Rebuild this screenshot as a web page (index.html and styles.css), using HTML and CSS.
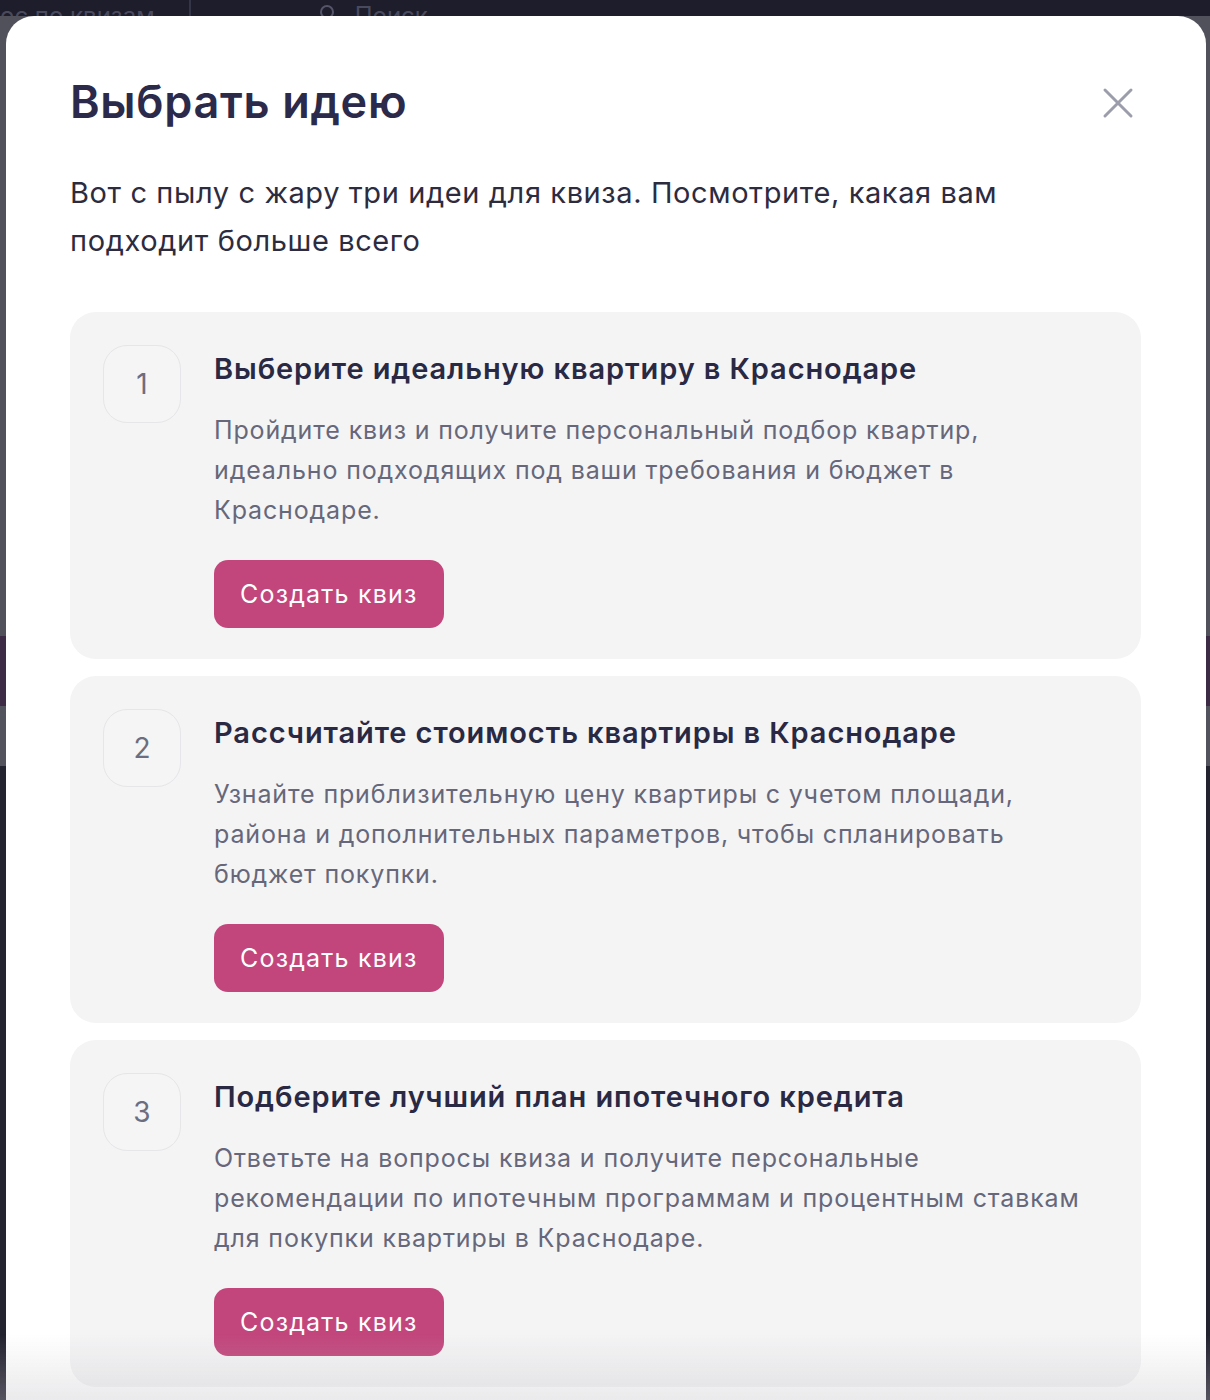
FILE: index.html
```html
<!DOCTYPE html>
<html lang="ru">
<head>
<meta charset="utf-8">
<title>Выбрать идею</title>
<link rel="stylesheet" href="styles.css">
</head>
<body>
<div class="backdrop">
  <div class="topbar">
    <span class="topbar-text">ос по квизам</span>
    <span class="topbar-sep"></span>
    <span class="topbar-search">
      <svg width="20" height="20" viewBox="0 0 20 20"><circle cx="8" cy="8" r="6" fill="none" stroke="#55556a" stroke-width="2"/></svg>
      <span class="topbar-text">Поиск</span>
    </span>
  </div>
  <div class="strip strip-a"></div>
  <div class="strip strip-b"></div>
  <div class="strip strip-c"></div>
  <div class="strip strip-d"></div>
</div>

<div class="modal">
  <div class="modal-head">
    <h1 class="modal-title">Выбрать идею</h1>
    <button class="close" aria-label="Закрыть">
      <svg width="32" height="32" viewBox="0 0 32 32"><path d="M3 3 L29 29 M29 3 L3 29" stroke="#9b9dab" stroke-width="3" stroke-linecap="round"/></svg>
    </button>
  </div>
  <p class="modal-sub">Вот с пылу с жару три идеи для квиза. Посмотрите, какая вам подходит больше всего</p>

  <div class="cards">
    <div class="card">
      <div class="num">1</div>
      <div class="card-body">
        <h2 class="card-title">Выберите идеальную квартиру в Краснодаре</h2>
        <p class="card-desc">Пройдите квиз и получите персональный подбор квартир, идеально подходящих под ваши требования и бюджет в Краснодаре.</p>
        <button class="btn">Создать квиз</button>
      </div>
    </div>
    <div class="card">
      <div class="num">2</div>
      <div class="card-body">
        <h2 class="card-title">Рассчитайте стоимость квартиры в Краснодаре</h2>
        <p class="card-desc">Узнайте приблизительную цену квартиры с учетом площади, района и дополнительных параметров, чтобы спланировать бюджет покупки.</p>
        <button class="btn">Создать квиз</button>
      </div>
    </div>
    <div class="card">
      <div class="num">3</div>
      <div class="card-body">
        <h2 class="card-title">Подберите лучший план ипотечного кредита</h2>
        <p class="card-desc">Ответьте на вопросы квиза и получите персональные рекомендации по ипотечным программам и процентным ставкам для покупки квартиры в Краснодаре.</p>
        <button class="btn">Создать квиз</button>
      </div>
    </div>
  </div>
</div>
<div class="fade"></div>
</body>
</html>
```

FILE: styles.css
```css
* { box-sizing: border-box; }
html, body { margin: 0; padding: 0; }
body {
  width: 1210px;
  height: 1400px;
  overflow: hidden;
  background: #4f4f5a;
  font-family: Inter, "Noto Sans", "Liberation Sans", sans-serif;
}
.backdrop {
  height: 1400px;
  display: flex;
  flex-direction: column;
}
.topbar {
  height: 16px;
  background: #1e1d2b;
  display: flex;
  align-items: flex-end;
  overflow: hidden;
  gap: 20px;
  flex: none;
}
.topbar-text {
  color: #4a4a5e;
  font-size: 24px;
  line-height: 18px;
  transform: translateY(9px);
  display: inline-block;
}
.topbar-sep { width: 2px; height: 16px; background: #35354a; margin-left: 14px; }
.topbar-search { display: flex; align-items: flex-end; gap: 16px; margin-left: 108px; }
.topbar-search svg { transform: translateY(8px); }
.strip { flex: none; }
.strip-a { height: 620px; background: #51515c; }
.strip-b { height: 70px; background: #3d2a45; }
.strip-c { height: 60px; background: #53535d; }
.strip-d { flex: 1; background: #23222f; }

.modal {
  position: fixed;
  top: 16px;
  left: 6px;
  width: 1200px;
  bottom: -40px;
  background: #ffffff;
  border-radius: 28px 28px 0 0;
  padding: 58px 65px 0 64px;
  overflow: hidden;
}
.modal-head {
  display: flex;
  justify-content: space-between;
  align-items: center;
}
.modal-title {
  margin: 0;
  font-size: 45px;
  line-height: 56px;
  font-weight: 600;
  color: #2b2a4b;
  letter-spacing: 0.7px;
}
.close {
  border: 0;
  background: none;
  padding: 0;
  width: 32px;
  height: 32px;
  margin-right: 7px;
  margin-top: 2px;
  display: flex;
}
.modal-sub {
  margin: 39px 0 0;
  width: 960px;
  font-size: 29px;
  line-height: 48px;
  color: #2d2c3f;
  font-weight: 400;
  letter-spacing: 0.6px;
}
.cards {
  margin-top: 47px;
  display: flex;
  flex-direction: column;
  gap: 17px;
}
.card {
  background: #f4f4f5;
  border-radius: 26px;
  padding: 33px 40px 31px 33px;
  display: flex;
  gap: 33px;
  align-items: flex-start;
}
.num {
  flex: none;
  width: 78px;
  height: 78px;
  border: 1.5px solid #e6e6e9;
  border-radius: 24px;
  display: flex;
  align-items: center;
  justify-content: center;
  font-size: 28px;
  color: #6c6e80;
  background: #f5f5f6;
}
.card-body { display: flex; flex-direction: column; align-items: flex-start; }
.card-title {
  margin: 0;
  font-size: 29px;
  line-height: 48px;
  font-weight: 600;
  color: #2a2944;
  letter-spacing: 0.9px;
}
.card-desc {
  margin: 17px 0 0;
  font-size: 25px;
  line-height: 40px;
  color: #66677a;
  max-width: 878px;
  letter-spacing: 0.85px;
}
.btn {
  margin-top: 30px;
  height: 68px;
  padding: 0 26px;
  border: 0;
  border-radius: 14px;
  background: #c2467c;
  color: #ffffff;
  font-family: inherit;
  font-size: 25px;
  font-weight: 400;
  letter-spacing: 1.2px;
}
.fade {
  position: fixed;
  left: 0;
  right: 0;
  bottom: 0;
  height: 66px;
  background: linear-gradient(to bottom, rgba(255,255,255,0) 0%, rgba(190,190,196,0.32) 100%);
  pointer-events: none;
}
```
